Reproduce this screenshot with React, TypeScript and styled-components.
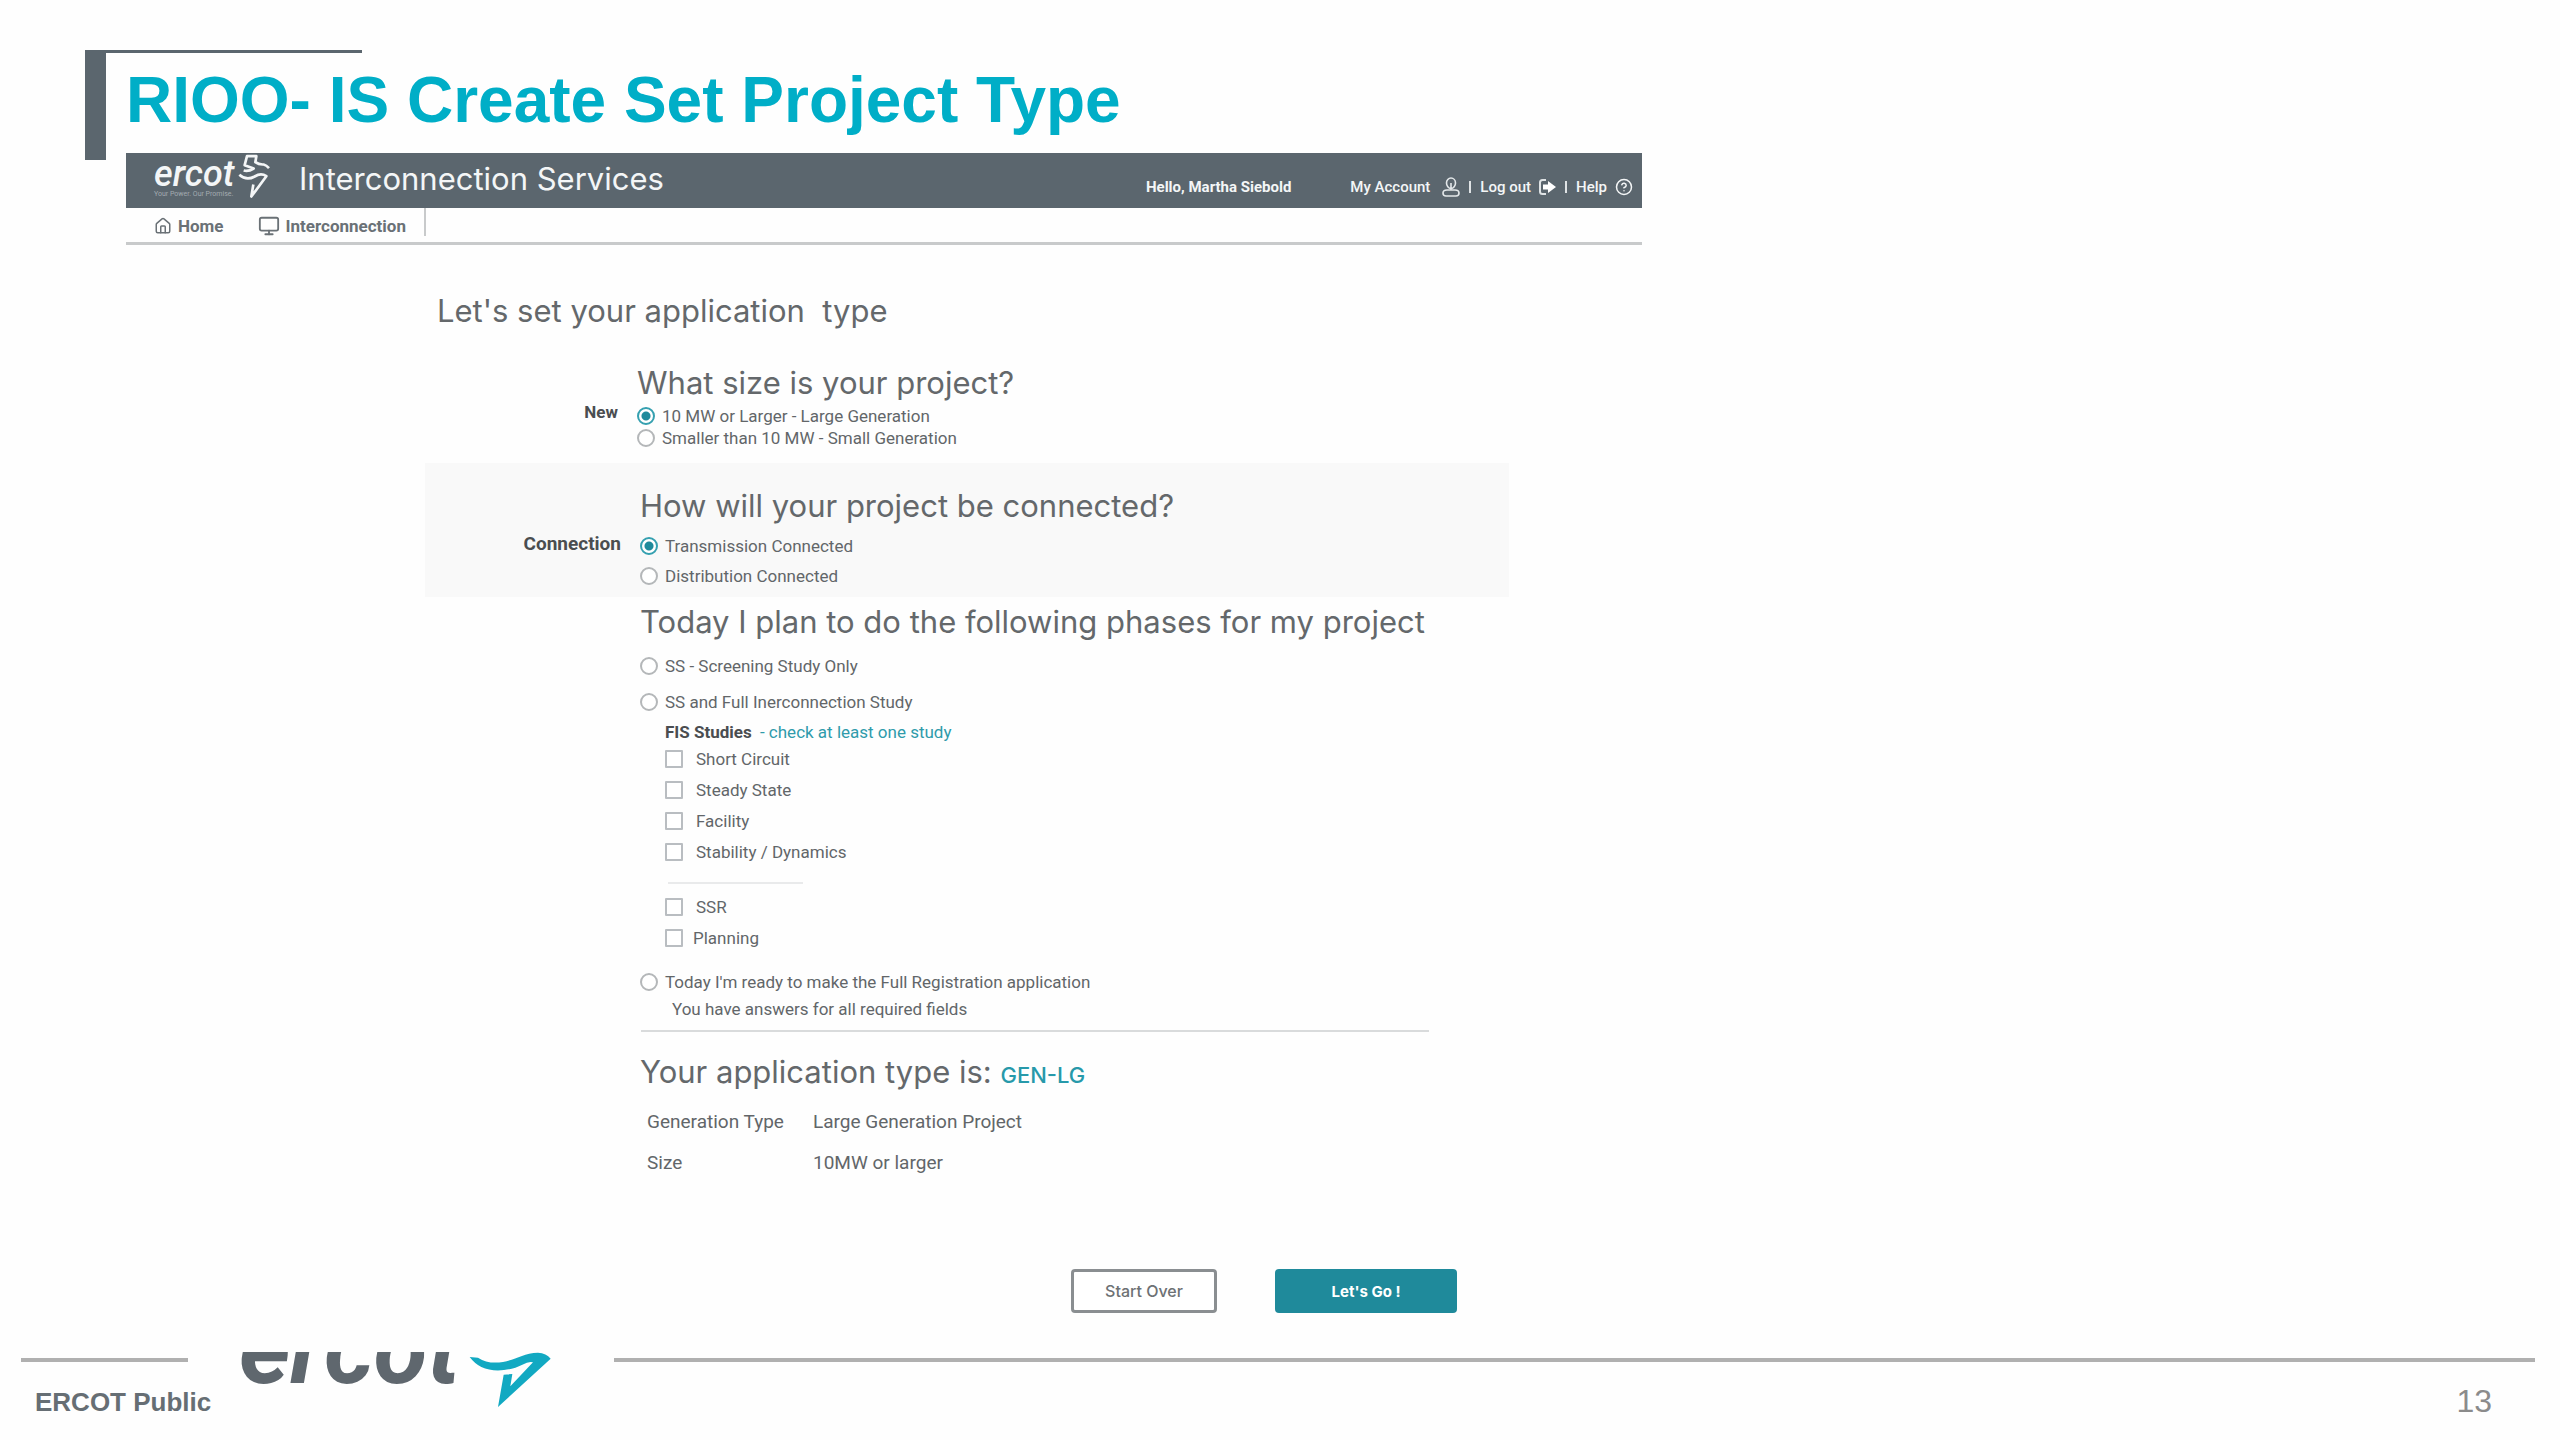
import React from "react";
import styled, { createGlobalStyle } from "styled-components";
import { House, Monitor, HelpCircle } from "lucide-react";

const slate = "#5b666e";
const teal = "#1f8a9b";
const rule = "#b0b0b0";
const heading = 'Inter, "Open Sans", sans-serif';
const arial = '"Liberation Sans", Arial, sans-serif';

const GlobalStyle = createGlobalStyle`
  *, *::before, *::after { box-sizing: border-box; }
  body { margin: 0; background: #fefefe; font-family: Roboto, "Open Sans", sans-serif; }
  h1, h2, h3, p { margin: 0; }
`;

const Slide = styled.div`
  min-height: 100vh;
  display: flex;
  flex-direction: column;
`;

const SlideBody = styled.main`
  display: grid;
  grid-template-columns: 21px minmax(0, 1fr);
  column-gap: 20px;
  padding: 50px 85px 0;
`;

const AccentBar = styled.div`
  position: relative;
  height: 110px;
  background: ${slate};
  &::after {
    content: "";
    position: absolute;
    top: 0;
    left: 0;
    width: 277px;
    height: 3px;
    background: ${slate};
  }
`;

const SlideTitle = styled.h1`
  font: 700 64px/101px ${arial};
  color: #00aec7;
  margin-bottom: 2px;
`;

const AppPanel = styled.section`
  width: 100%;
  max-width: 1516px;
`;

const AppHeader = styled.header`
  height: 55px;
  padding: 0 9px 0 28px;
  display: flex;
  background: ${slate};
  color: #f4f6f7;
`;

const Brand = styled.div`
  width: 145px;
  display: flex;
`;

const BrandText = styled.div`
  width: 83px;
  padding-top: 5px;
`;

const BrandName = styled.div`
  font: italic 500 36px/32px Roboto, sans-serif;
`;

const Tagline = styled.div`
  font-size: 7px;
  line-height: 8px;
  color: #a3abb0;
  white-space: nowrap;
`;

const AppTitle = styled.h2`
  font: 400 31px/52px ${heading};
  flex: 1;
`;

const Account = styled.div`
  display: flex;
  align-items: center;
  padding-top: 12px;
  font-size: 15px;
  line-height: 20px;
  white-space: nowrap;
`;

const Greeting = styled.strong`
  margin-right: 59px;
`;

const AccountLink = styled.a<{ $gap: number }>`
  display: flex;
  align-items: center;
  gap: ${(p) => p.$gap}px;
  color: inherit;
  font-weight: 500;
  text-decoration: none;
`;

const Pipe = styled.span`
  width: 2px;
  height: 12px;
  margin: 0 9px;
  background: #dfe3e5;
`;

const Nav = styled.nav`
  height: 37px;
  padding-left: 28px;
  border-bottom: 3px solid #c8cacb;
  display: flex;
  align-items: flex-start;
`;

const NavLink = styled.a`
  display: flex;
  align-items: center;
  gap: 6px;
  height: 36px;
  margin-right: 34px;
  color: #6a7176;
  font-size: 17px;
  font-weight: 700;
  text-decoration: none;
  & + & { margin-right: 18px; }
`;

const NavDivider = styled.span`
  width: 2px;
  height: 28px;
  background: #c8cacb;
`;

const Form = styled.form`
  padding: 46px 133px 0 299px;
  color: #626669;
`;

const Heading = styled.h3`
  font: 400 31px/40px ${heading};
  color: #64686b;
  white-space: pre;
`;

const PageHeading = styled(Heading)`
  padding-left: 12px;
  margin-bottom: 32px;
`;

const Section = styled.fieldset<{ $label?: number; $after?: number; $shaded?: boolean }>`
  margin: 0 0 ${(p) => p.$after ?? 0}px;
  border: 0;
  min-width: 0;
  display: grid;
  grid-template-columns: ${(p) => p.$label ?? 196}px minmax(0, 1fr);
  column-gap: 19px;
  padding: ${(p) => (p.$shaded ? "23px 0 6px" : "0")};
  background: ${(p) => (p.$shaded ? "#f9f9f9" : "transparent")};
`;

const SectionLabel = styled.div<{ $size: number; $top: number }>`
  padding-top: ${(p) => p.$top}px;
  font-size: ${(p) => p.$size}px;
  line-height: 22px;
  font-weight: 700;
  text-align: right;
  color: #4a4d50;
`;

const SectionBody = styled.div`
  grid-column: 2;
`;

const Options = styled.div<{ $top?: number; $indent?: number }>`
  padding-top: ${(p) => p.$top ?? 0}px;
  padding-left: ${(p) => p.$indent ?? 0}px;
`;

const Option = styled.label<{ $row: number; $gap?: number }>`
  display: flex;
  align-items: center;
  gap: ${(p) => p.$gap ?? 7}px;
  height: ${(p) => p.$row}px;
  font-size: 17px;
`;

const Radio = styled.input.attrs({ type: "radio" })`
  appearance: none;
  width: 18px;
  height: 18px;
  margin: 0;
  border: 2px solid #b4b7b9;
  border-radius: 50%;
  background: #fff;
  &:checked {
    border-color: #35a0b0;
    background: radial-gradient(circle, ${teal} 0 4px, #fff 5px);
  }
`;

const Checkbox = styled.input.attrs({ type: "checkbox" })`
  appearance: none;
  width: 18px;
  height: 18px;
  margin: 0;
  border: 2px solid #b9bdc1;
  border-radius: 1px;
  background: #fff;
`;

const StudiesTitle = styled.p`
  font-size: 17px;
  line-height: 21px;
  color: #2f9bab;
  strong { color: #4a4d50; margin-right: 4px; }
`;

const ShortDivider = styled.hr`
  width: 135px;
  height: 2px;
  margin: 15px 0 7px 3px;
  border: 0;
  background: #e9eaeb;
`;

const Note = styled.p`
  padding-left: 32px;
  font-size: 17px;
  line-height: 18px;
`;

const Divider = styled.hr`
  max-width: 788px;
  height: 2px;
  margin: 12px 0 20px 1px;
  border: 0;
  background: #d9dbdc;
`;

const TypeCode = styled.span`
  font-size: 22px;
  font-weight: 500;
  color: #2799aa;
`;

const Summary = styled.table`
  margin: 6px 0 86px 7px;
  border-collapse: collapse;
  font-size: 19px;
  th, td { height: 41px; padding: 0; font-weight: 400; text-align: left; }
  th { width: 166px; }
`;

const Actions = styled.div`
  display: flex;
  justify-content: flex-end;
  gap: 58px;
  padding-right: 52px;
`;

const Button = styled.button<{ $primary?: boolean }>`
  width: ${(p) => (p.$primary ? 182 : 146)}px;
  height: 44px;
  padding: 0;
  border: ${(p) => (p.$primary ? "0" : "3px solid #8a8e91")};
  border-radius: 4px;
  background: ${(p) => (p.$primary ? teal : "#fff")};
  color: ${(p) => (p.$primary ? "#fff" : "#6d7174")};
  font: ${(p) => (p.$primary ? 700 : 500)} ${(p) => (p.$primary ? 15 : 16)}px ${heading};
`;

const Footer = styled.footer`
  margin-top: auto;
  height: 88px;
  padding: 0 25px 0 21px;
  display: grid;
  grid-template-columns: 218px 375px minmax(0, 1fr);
`;

const FooterRule = styled.hr<{ $width?: number }>`
  width: ${(p) => (p.$width ? `${p.$width}px` : "100%")};
  height: 4px;
  margin: 6px 0 24px;
  border: 0;
  background: ${rule};
`;

const Classification = styled.p`
  padding-left: 14px;
  font: 700 26px/32px ${arial};
  color: #666e74;
`;

const PageNumber = styled.p`
  padding-right: 43px;
  font: 400 32px/30px ${arial};
  text-align: right;
  color: #8b8b8b;
`;

const FooterLogo = styled.div`
  display: flex;
  align-items: flex-start;
  gap: 10px;
`;

const Wordmark = styled.div`
  height: 34px;
  width: 219px;
  overflow: hidden;
  display: flex;
  align-items: flex-end;
  font: italic 700 98px/72px Roboto, sans-serif;
  color: #5f676e;
`;

const HeaderBird = () => (
  <svg width="35" height="47" viewBox="290 22 105 140" fill="none" stroke="#f4f6f7" strokeWidth="8" strokeLinejoin="round">
    <path d="M310 74Q324 78 340 68L313 58L320 31H348L345 49Q356 57 370 56Q378 58 386 67" />
    <path d="M297 87Q318 106 343 92Q362 80 378 91L333 152L339 116" />
  </svg>
);

const FooterBird = () => (
  <svg width="85" height="58" viewBox="55 35 255 174" fill="#12a9c2">
    <path d="M60 50L85 52Q115 72 160 65C200 58 220 38 265 37Q290 38 303 55L145 200L162 103L188 101L182 138L250 66Q238 62 218 73C180 92 130 97 95 80Q75 70 60 50Z" />
  </svg>
);

const PersonIcon = () => (
  <svg width="18" height="20" viewBox="0 0 18 20" fill="none" stroke="#e3e7e9" strokeWidth="1.6">
    <path d="M9 1a4.500 5 0 0 1 4.500 5c0 2.500-2 5.500-4.500 5.500S4.500 8.500 4.500 6A4.500 5 0 0 1 9 1ZM9 6v7" />
    <path d="M5 13h8c2.500 0 4 1.500 4 3s-1 3-3 3H4c-2 0-3-1.500-3-3s1.500-3 4-3Z" />
  </svg>
);

const LogoutIcon = () => (
  <svg width="17" height="16" viewBox="0 0 17 16" fill="none" stroke="#dfe3e5" strokeWidth="2">
    <path d="M7 1H3.500Q1 1 1 3.500v9Q1 15 3.500 15H7" />
    <path d="M4 5.500h5V2L17 8l-8 6v-3.500H4Z" fill="#fff" stroke="none" />
  </svg>
);

const studies = ["Short Circuit", "Steady State", "Facility", "Stability / Dynamics"];

export default function App() {
  return (
    <>
      <GlobalStyle />
      <Slide>
        <SlideBody>
          <AccentBar />
          <div>
            <SlideTitle>RIOO- IS Create Set Project Type</SlideTitle>
            <AppPanel>
              <AppHeader>
                <Brand>
                  <BrandText>
                    <BrandName>ercot</BrandName>
                    <Tagline>Your Power. Our Promise.</Tagline>
                  </BrandText>
                  <HeaderBird />
                </Brand>
                <AppTitle>Interconnection Services</AppTitle>
                <Account>
                  <Greeting>Hello, Martha Siebold</Greeting>
                  <AccountLink href="#account" $gap={12}>My Account <PersonIcon /></AccountLink>
                  <Pipe />
                  <AccountLink href="#logout" $gap={8}>Log out <LogoutIcon /></AccountLink>
                  <Pipe />
                  <AccountLink href="#help" $gap={8}>Help <HelpCircle size={18} strokeWidth={2} /></AccountLink>
                </Account>
              </AppHeader>
              <Nav>
                <NavLink href="#home"><House size={18} />Home</NavLink>
                <NavLink href="#interconnection"><Monitor size={22} />Interconnection</NavLink>
                <NavDivider />
              </Nav>
              <Form onSubmit={(e) => e.preventDefault()}>
                <PageHeading>{"Let's set your application  type"}</PageHeading>

                <Section $label={193} $after={14}>
                  <SectionLabel $size={17} $top={38}>New</SectionLabel>
                  <SectionBody>
                    <Heading>What size is your project?</Heading>
                    <Options $top={2}>
                      <Option $row={22}><Radio name="size" defaultChecked />10 MW or Larger - Large Generation</Option>
                      <Option $row={22}><Radio name="size" />Smaller than 10 MW - Small Generation</Option>
                    </Options>
                  </SectionBody>
                </Section>

                <Section $shaded>
                  <SectionLabel $size={19} $top={47}>Connection</SectionLabel>
                  <SectionBody>
                    <Heading>How will your project be connected?</Heading>
                    <Options $top={5}>
                      <Option $row={30}><Radio name="connection" defaultChecked />Transmission Connected</Option>
                      <Option $row={30}><Radio name="connection" />Distribution Connected</Option>
                    </Options>
                  </SectionBody>
                </Section>

                <Section>
                  <SectionBody>
                    <Options $top={5}>
                      <Heading>Today I plan to do the following phases for my project</Heading>
                    </Options>
                    <Options $top={6}>
                      <Option $row={36}><Radio name="phase" />SS - Screening Study Only</Option>
                      <Option $row={36}><Radio name="phase" />SS and Full Inerconnection Study</Option>
                    </Options>
                    <Options $top={2} $indent={25}>
                      <StudiesTitle><strong>FIS Studies</strong> - check at least one study</StudiesTitle>
                      {studies.map((s) => (
                        <Option key={s} $row={31} $gap={13}><Checkbox />{s}</Option>
                      ))}
                      <ShortDivider />
                      <Option $row={31} $gap={13}><Checkbox />SSR</Option>
                      <Option $row={31} $gap={10}><Checkbox />Planning</Option>
                    </Options>
                    <Options $top={11}>
                      <Option $row={36}><Radio name="phase" />Today I'm ready to make the Full Registration application</Option>
                      <Note>You have answers for all required fields</Note>
                    </Options>
                    <Divider />
                    <Heading>Your application type is: <TypeCode>GEN-LG</TypeCode></Heading>
                    <Summary>
                      <tbody>
                        <tr><th scope="row">Generation Type</th><td>Large Generation Project</td></tr>
                        <tr><th scope="row">Size</th><td>10MW or larger</td></tr>
                      </tbody>
                    </Summary>
                  </SectionBody>
                </Section>
                <Actions>
                  <Button type="reset">Start Over</Button>
                  <Button type="submit" $primary>Let's Go !</Button>
                </Actions>
              </Form>
            </AppPanel>
          </div>
        </SlideBody>
        <Footer>
          <div>
            <FooterRule $width={167} />
            <Classification>ERCOT Public</Classification>
          </div>
          <FooterLogo>
            <Wordmark>ercot</Wordmark>
            <FooterBird />
          </FooterLogo>
          <div>
            <FooterRule />
            <PageNumber>13</PageNumber>
          </div>
        </Footer>
      </Slide>
    </>
  );
}
